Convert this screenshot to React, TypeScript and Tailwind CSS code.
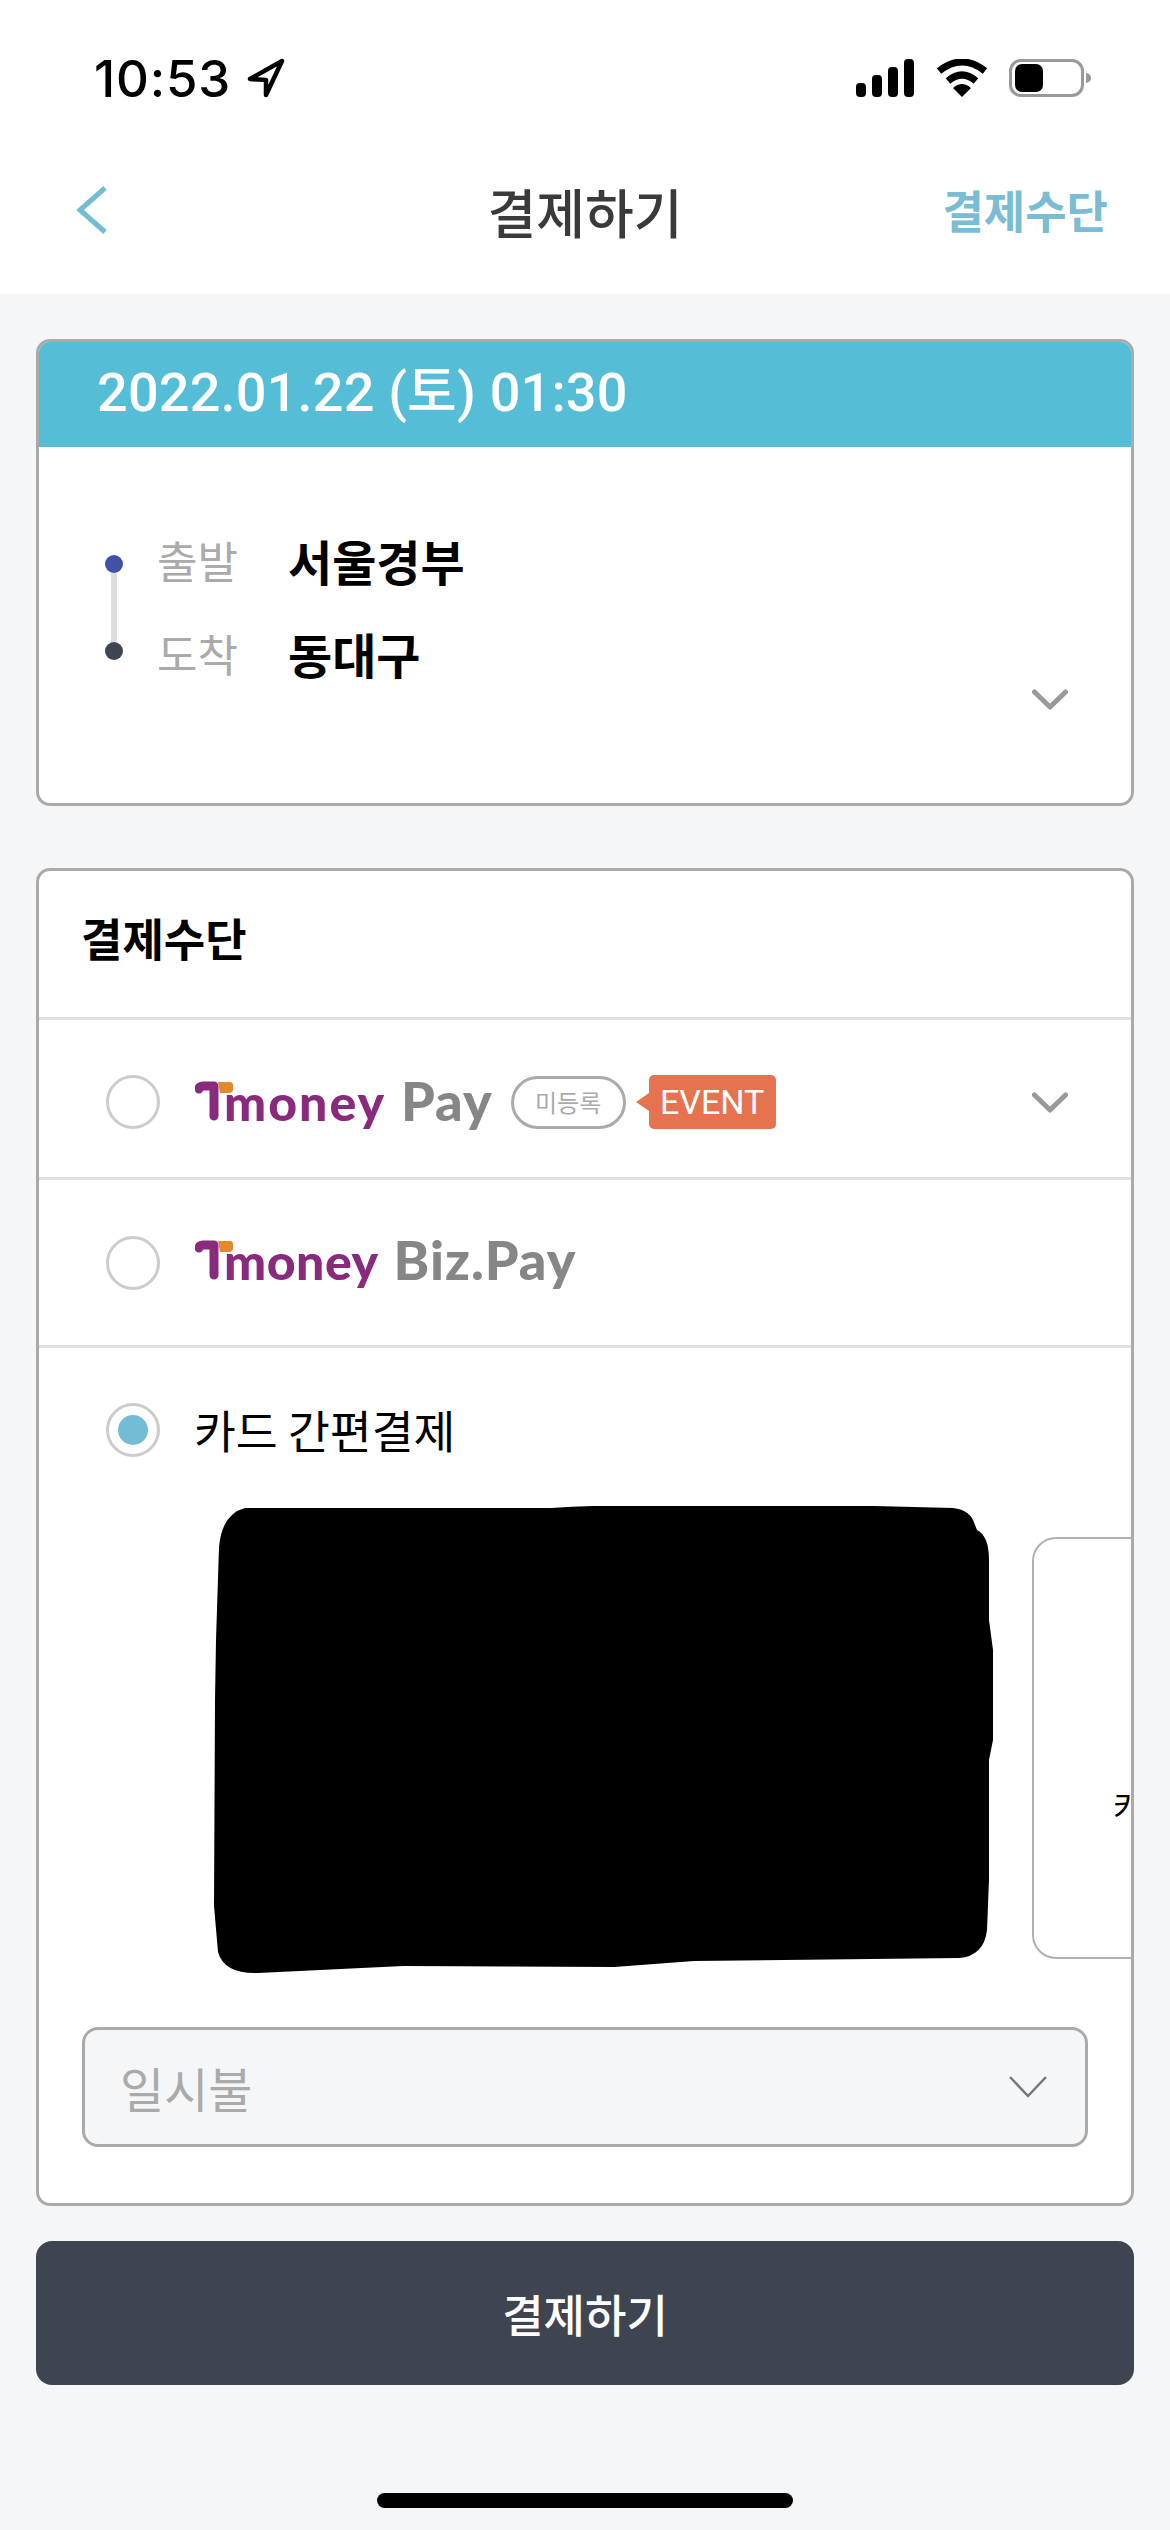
import React from 'react';

const KR = 'font-["Noto_Sans_CJK_KR","Noto_Sans",sans-serif]';

const Chevron: React.FC<{ className?: string }> = ({ className }) => (
  <svg width="36" height="22" viewBox="0 0 36 22" fill="none" className={className}>
    <path d="M2.5 3 L18 18 L33.5 3" stroke="#999999" strokeWidth="5" strokeLinecap="round" strokeLinejoin="round" />
  </svg>
);

const Radio: React.FC<{ checked?: boolean }> = ({ checked }) => (
  <span className="flex h-[54px] w-[54px] shrink-0 items-center justify-center rounded-full border-[3px] border-[#cccccc] bg-white">
    {checked && <span className="h-[30px] w-[30px] rounded-full bg-[#72bcd6]" />}
  </span>
);

// T mark of the Tmoney logo, sits on the text baseline
const TMark = () => (
  <svg width="38" height="40" viewBox="0 0 38 40" fill="none" className="-mr-[9px] shrink-0">
    <path d="M4 8 Q4 5 8 5 H19 V35" stroke="#8a2a7c" strokeWidth="9" strokeLinecap="round" strokeLinejoin="round" />
    <path d="M23 1 H35 Q38 1 38 4 V8 Q38 12 34 12 H25 Z" fill="#e08a2c" />
  </svg>
);

const TmoneyLogo: React.FC<{ suffix: string; tracking: string }> = ({ suffix, tracking }) => (
  <span className='flex items-baseline gap-[15px] font-["Lato",sans-serif] font-black'>
    <span className="flex items-baseline">
      <TMark />
      <span className={`text-[50px] leading-none text-[#8a2a7c] ${tracking}`}>money</span>
    </span>
    <span className="text-[54px] leading-none tracking-[1px] text-[#868686]">{suffix}</span>
  </span>
);

const StatusBar = () => (
  <div className="flex h-[156px] items-center justify-between pl-[94px] pr-[79px]">
    <div className="flex items-center gap-[16px]">
      <span className='font-["Inter",sans-serif] text-[51px] font-medium leading-none tracking-[0.8px] text-black'>10:53</span>
      <svg width="38" height="40" viewBox="0 0 38 40" fill="none">
        <path d="M35 3 L3 21 L19 22 L19 37 Z" stroke="#000" strokeWidth="4.5" strokeLinejoin="round" />
      </svg>
    </div>
    <div className="flex items-center">
      <svg width="58" height="38" viewBox="0 0 58 38" fill="#000">
        <rect x="0" y="24" width="10" height="14" rx="4" />
        <rect x="16" y="16" width="10" height="22" rx="4" />
        <rect x="32" y="8" width="10" height="30" rx="4" />
        <rect x="48" y="0" width="10" height="38" rx="4" />
      </svg>
      <svg width="52" height="38" viewBox="0 0 52 38" fill="none" className="ml-[22px]">
        <path d="M3 12 Q26 -6 49 12" stroke="#000" strokeWidth="7" />
        <path d="M12 22 Q26 10 40 22" stroke="#000" strokeWidth="7" />
        <path d="M17 29 Q26 21 35 29 L26 38 Z" fill="#000" />
      </svg>
      <div className="ml-[21px] flex items-center">
        <div className="flex h-[38px] w-[75px] items-center rounded-[12px] border-[3px] border-[#999999] pl-[3px]">
          <div className="h-[28px] w-[28px] rounded-[7px] bg-black" />
        </div>
        <div className="ml-[2px] h-[10px] w-[5px] rounded-r-full bg-[#999999]" />
      </div>
    </div>
  </div>
);

const NavBar = () => (
  <div className={`grid h-[112px] grid-cols-[1fr_auto_1fr] items-center px-[62px] ${KR}`}>
    <svg width="32" height="50" viewBox="0 0 32 50" fill="none" className="ml-[14px] -mt-[4px]">
      <path d="M29 3 L4 25 L29 47" stroke="#72bcd6" strokeWidth="5" />
    </svg>
    <h1 className="mb-[2px] text-[53px] font-medium leading-none text-[#3a3a3a]">결제하기</h1>
    <span className="mb-[6px] justify-self-end text-[45px] font-semibold leading-none text-[#79bcd3]">결제수단</span>
  </div>
);

const RouteCard = () => (
  <section className="overflow-hidden rounded-[14px] border-[3px] border-[#aaaaaa] bg-white">
    <div className='flex h-[105px] items-center bg-[#55bed6] pb-[4px] pl-[58px] font-["Roboto","Noto_Sans_CJK_KR",sans-serif] text-[54px] font-medium leading-none tracking-[0.2px] text-white'>
      2022.01.22 (토) 01:30
    </div>
    <div className={`flex h-[356px] items-start pl-[66px] pr-[63px] pt-[66px] ${KR}`}>
      <div className="mt-[42px] flex flex-col items-center">
        <span className="h-[18px] w-[18px] rounded-full bg-[#3f51a8]" />
        <span className="h-[69px] w-[6px] bg-[#dddddd]" />
        <span className="h-[18px] w-[18px] rounded-full bg-[#3f4550]" />
      </div>
      <div className="ml-[34px] flex flex-col">
        <div className="flex h-[93px] items-center">
          <span className="w-[131px] text-[44px] leading-none text-[#aaaaaa]">출발</span>
          <span className="text-[48px] font-bold leading-none text-black">서울경부</span>
        </div>
        <div className="flex h-[93px] items-center">
          <span className="w-[131px] text-[44px] leading-none text-[#aaaaaa]">도착</span>
          <span className="text-[48px] font-bold leading-none text-black">동대구</span>
        </div>
      </div>
      <Chevron className="mb-[92px] ml-auto self-end" />
    </div>
  </section>
);

const PaymentCard = () => (
  <section className={`mt-[62px] overflow-hidden rounded-[14px] border-[3px] border-[#aaaaaa] bg-white ${KR}`}>
    <div className="flex h-[149px] items-center border-b-[3px] border-[#e0e0e0] pl-[42px]">
      <h2 className="mb-[14px] text-[45px] font-bold leading-none text-black">결제수단</h2>
    </div>

    <div className="flex h-[160px] items-center border-b-[3px] border-[#e0e0e0] pl-[67px] pr-[63px] pt-[7px]">
      <Radio />
      <span className="mb-[3px] ml-[35px]">
        <TmoneyLogo suffix="Pay" tracking="tracking-[2px]" />
      </span>
      <span className="ml-[18px] flex h-[53px] w-[115px] items-center justify-center rounded-full border-[3px] border-[#aaaaaa] text-[24px] leading-none text-[#aaaaaa]">
        미등록
      </span>
      <span className="ml-[10px] h-0 w-0 border-y-[9px] border-r-[13px] border-y-transparent border-r-[#e57350]" />
      <span className='flex h-[54px] w-[127px] items-center justify-center rounded-[5px] bg-[#e57350] font-["Roboto",sans-serif] text-[34px] leading-none text-white'>
        EVENT
      </span>
      <Chevron className="ml-auto mt-[2px]" />
    </div>

    <div className="flex h-[168px] items-center border-b-[3px] border-[#e0e0e0] pl-[67px]">
      <Radio />
      <span className="mb-[6px] ml-[35px]">
        <TmoneyLogo suffix="Biz.Pay" tracking="tracking-[0.5px]" />
      </span>
    </div>

    <div className="pb-[56px] pt-[55px]">
      <div className="flex items-center pl-[67px]">
        <Radio checked />
        <span className="ml-[34px] text-[45.5px] leading-none text-black">카드 간편결제</span>
      </div>

      <div className="mt-[49px] flex items-start overflow-hidden pl-[175px]">
        {/* card hidden by a black scribble in the screenshot */}
        <svg width="780" height="468" viewBox="0 0 780 468" className="shrink-0">
          <path
            fill="#000"
            d="M5 41 Q8 8 31 2 L337 2 Q380 -1 420 0 L660 0 L739 2 Q757 4 761 19 L763 24 Q775 30 775 54 L775 114 L779 144 L779 234 L775 254 L775 374 L773 424 Q770 450 745 452 L480 455 L400 461 L189 460 L44 467 Q10 468 4 446 L0 400 L1 194 L2 134 Z"
          />
        </svg>
        <div className="ml-[38px] mt-[31px] flex h-[422px] w-[776px] shrink-0 items-center rounded-[24px] border-2 border-[#b0b0b0] pl-[79px] pt-[114px]">
          <span className="text-[32px] leading-none text-black">카드 등록</span>
        </div>
      </div>

      <div className="mx-[43px] mt-[53px] flex h-[120px] items-center justify-between rounded-[16px] border-[3px] border-[#aaaaaa] bg-[#f5f6f8] pl-[35px] pr-[38px]">
        <span className="text-[48px] leading-none text-[#aaaaaa]">일시불</span>
        <svg width="38" height="22" viewBox="0 0 38 22" fill="none">
          <path d="M1 1 L19 20 L37 1" stroke="#777777" strokeWidth="2.5" />
        </svg>
      </div>
    </div>
  </section>
);

export default function App() {
  return (
    <div className="flex h-[2530px] w-[1170px] flex-col overflow-hidden bg-[#f5f6f8]">
      <header className="bg-white pb-[26px]">
        <StatusBar />
        <NavBar />
      </header>

      <main className="px-[36px] pt-[45px]">
        <RouteCard />
        <PaymentCard />
        <button className={`mt-[35px] flex h-[144px] w-full items-center justify-center rounded-[16px] bg-[#3f4550] text-[45px] font-medium leading-none text-white ${KR}`}>
          결제하기
        </button>
      </main>

      <div className="mx-auto mt-[108px] h-[15px] w-[416px] rounded-full bg-black" />
    </div>
  );
}
